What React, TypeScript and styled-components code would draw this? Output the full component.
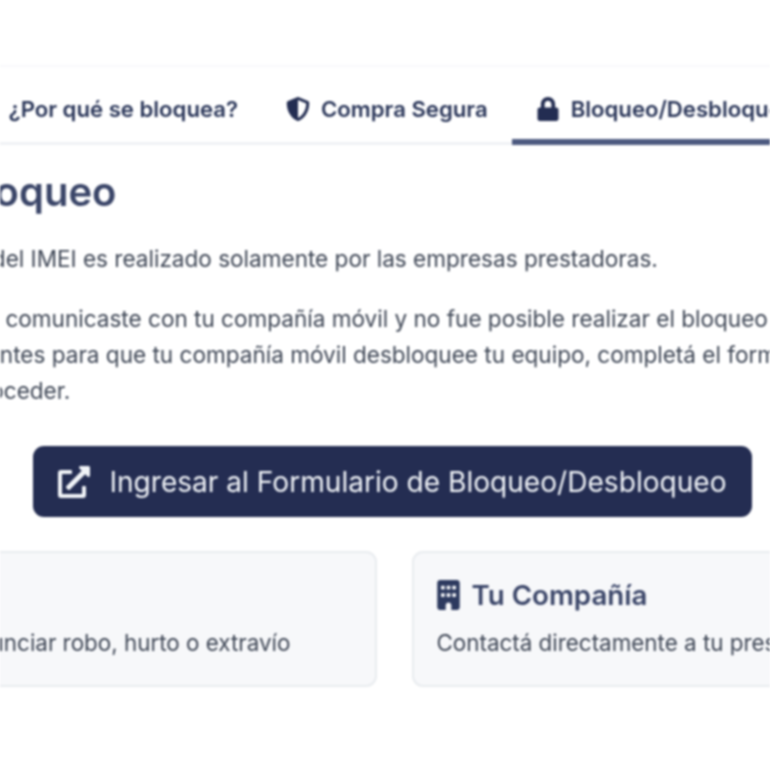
import React from "react";
import styled, { createGlobalStyle } from "styled-components";
import { FaExternalLinkAlt, FaLock, FaQuestionCircle, FaShieldAlt, FaShieldVirus } from "react-icons/fa";
import { FaBuilding } from "react-icons/fa6";

const GlobalStyle = createGlobalStyle`
  html, body {
    margin: 0;
    padding: 0;
    background: #fff;
    overflow: hidden;
  }
`;

const Viewport = styled.div`
  width: 770px;
  height: 770px;
  overflow: hidden;
  background: #fff;
  filter: blur(1.1px);
  font-family: Inter, "Liberation Sans", sans-serif;
`;

const Stage = styled.div`
  width: 1308px;
  margin-left: -260px;
  padding-top: 65px;
`;

const Tabs = styled.nav`
  display: flex;
  height: 75px;
  border-top: 2px solid #f8f9fb;
  border-bottom: 3px solid #f0f2f5;
`;

const Tab = styled.div<{ $active?: boolean }>`
  display: flex;
  align-items: center;
  gap: 11px;
  box-sizing: border-box;
  height: 80px;
  margin-top: -2px;
  padding: 13px 24px 0;
  border-bottom: 6px solid ${(p) => (p.$active ? "#4d5a80" : "transparent")};
  color: #2a3659;
  font-size: 22.15px;
  font-weight: 600;
  white-space: nowrap;

  &:first-child {
    margin-left: -2px;
  }

  svg {
    color: #232d52;
    font-size: 24px;
    flex: none;
  }
`;

const Panel = styled.section`
  padding-top: 25px;
`;

const Heading = styled.h2`
  margin: 0 0 27px;
  color: #3a4568;
  font-size: 40px;
  line-height: 44px;
  font-weight: 600;
  white-space: nowrap;
`;

const Paragraph = styled.p`
  margin: 0 0 24px;
  color: #3f4756;
  font-size: 22.55px;
  line-height: 36px;
  white-space: nowrap;
`;

const ActionRow = styled.div`
  display: flex;
  justify-content: center;
  margin: 37px 0 34px;
  padding-right: 3px;
`;

const ActionButton = styled.a`
  display: flex;
  align-items: center;
  gap: 19px;
  height: 71px;
  padding: 0 25px;
  box-sizing: border-box;
  border-radius: 11px;
  background: #242d52;
  color: #f1f4f8;
  font-size: 28.1px;
  white-space: nowrap;

  svg {
    font-size: 32px;
    flex: none;
  }
`;

const Cards = styled.div`
  display: grid;
  grid-template-columns: minmax(0, 1fr) minmax(0, 1fr);
  gap: 35px;
`;

const Card = styled.article`
  height: 136px;
  box-sizing: border-box;
  padding: 24px 23px;
  background: #f7f8fa;
  border: 2px solid #e9ecef;
  border-radius: 11px;
`;

const CardTitle = styled.h3`
  display: flex;
  align-items: center;
  gap: 12px;
  margin: 0 0 15px;
  color: #3a4568;
  font-size: 27.7px;
  line-height: 36px;
  font-weight: 600;

  svg {
    width: 23px;
    height: 30px;
    color: #2d3a5f;
    flex: none;
  }
`;

const CardText = styled.p`
  margin: 0;
  color: #3f4756;
  font-size: 22.4px;
  line-height: 30px;
  white-space: nowrap;
`;

export default function App() {
  return (
    <Viewport>
      <GlobalStyle />
      <Stage>
        <Tabs>
          <Tab>
            <FaShieldVirus />
            Información
          </Tab>
          <Tab>
            <FaQuestionCircle />
            ¿Por qué se bloquea?
          </Tab>
          <Tab>
            <FaShieldAlt />
            Compra Segura
          </Tab>
          <Tab $active>
            <FaLock />
            Bloqueo/Desbloqueo
          </Tab>
        </Tabs>
        <Panel>
          <Heading>Gestión de Bloqueo</Heading>
          <Paragraph>
            El bloqueo/desbloqueo del IMEI es realizado solamente por las empresas prestadoras.
          </Paragraph>
          <Paragraph>
            Tomá en cuenta: si ya te comunicaste con tu compañía móvil y no fue posible realizar el bloqueo o desbloqueo,
            <br />
            con documentos pertinentes para que tu compañía móvil desbloquee tu equipo, completá el formulario
            <br />
            Seguí los pasos para proceder.
          </Paragraph>
          <ActionRow>
            <ActionButton>
              <FaExternalLinkAlt />
              Ingresar al Formulario de Bloqueo/Desbloqueo
            </ActionButton>
          </ActionRow>
          <Cards>
            <Card>
              <CardTitle>Autoridades</CardTitle>
              <CardText>Llamá al 911 para denunciar robo, hurto o extravío</CardText>
            </Card>
            <Card>
              <CardTitle>
                <FaBuilding />
                Tu Compañía
              </CardTitle>
              <CardText>Contactá directamente a tu prestadora de servicio móvil</CardText>
            </Card>
          </Cards>
        </Panel>
      </Stage>
    </Viewport>
  );
}
